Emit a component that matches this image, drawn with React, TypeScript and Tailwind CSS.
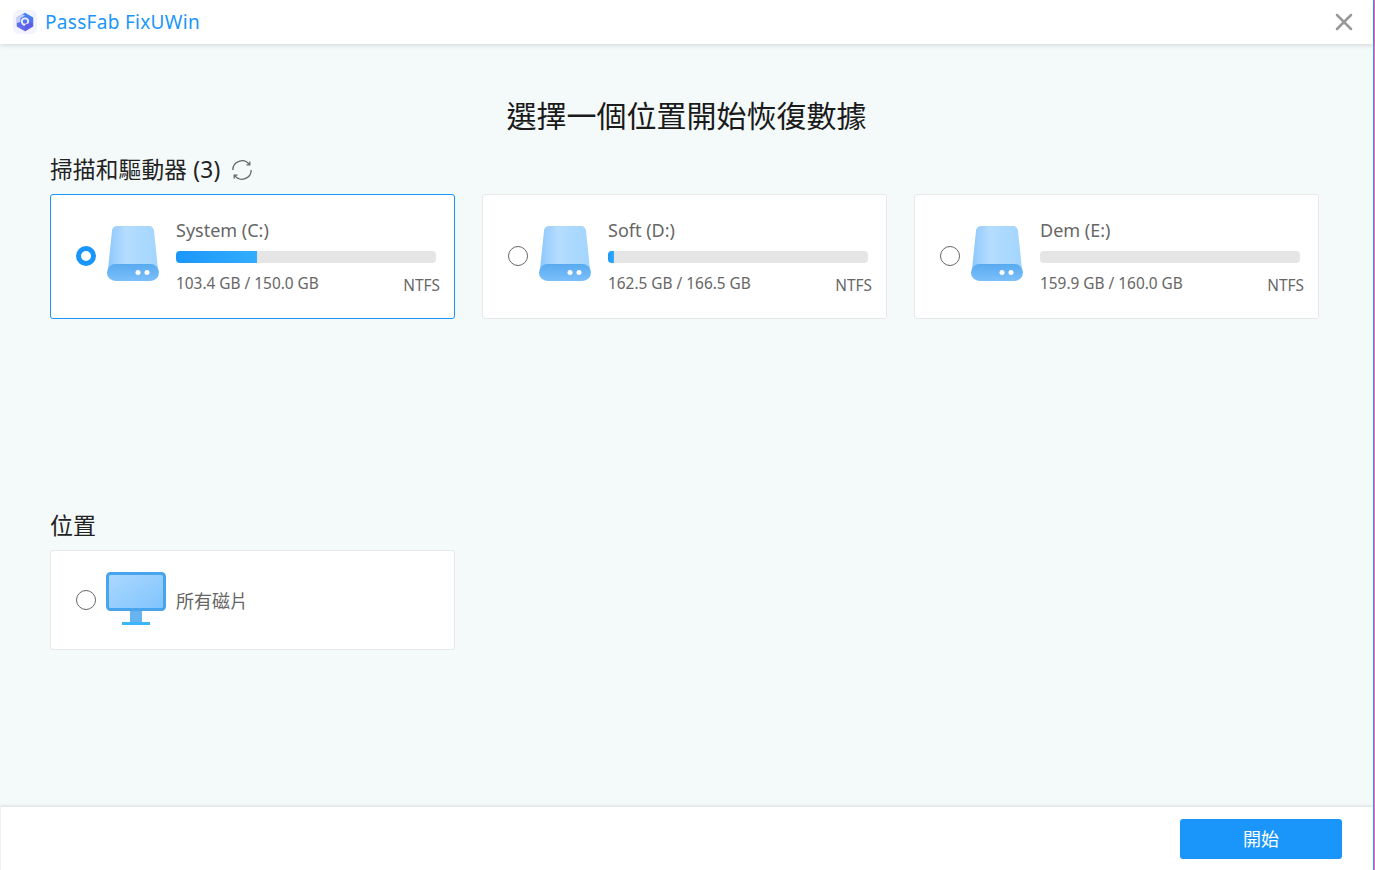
import { X } from 'lucide-react';

const SANS = "font-['Noto_Sans','Noto_Sans_CJK_TC',sans-serif]";

const drives = [
  { name: 'System (C:)', size: '103.4 GB / 150.0 GB', used: 81, selected: true },
  { name: 'Soft (D:)', size: '162.5 GB / 166.5 GB', used: 6, selected: false },
  { name: 'Dem (E:)', size: '159.9 GB / 160.0 GB', used: 0, selected: false },
];

function Logo() {
  return (
    <div className="flex h-6 w-6 items-center justify-center rounded-md bg-[#f3f3fd]">
      <svg viewBox="0 0 24 24" className="h-[22px] w-[22px]">
        <defs>
          <linearGradient id="logoFill" x1="0" y1="0" x2="0" y2="1">
            <stop offset="0" stopColor="#3f86f2" />
            <stop offset="1" stopColor="#6d62ea" />
          </linearGradient>
        </defs>
        <path d="M12 2l9 5v10l-9 5-9-5V7z" fill="url(#logoFill)" />
        <path d="M3 7l6-3.400 3 1.400-5 3v4l-4 1z" fill="#c9d0fb" />
        <circle cx="12" cy="11.500" r="3.500" fill="none" stroke="#eef0ff" strokeWidth="2" />
        <path d="M12 15l8-3v5l-8 5z" fill="#5b5fe6" />
      </svg>
    </div>
  );
}

function Radio({ checked }: { checked: boolean }) {
  return checked ? (
    <span className="block h-5 w-5 shrink-0 rounded-full border-[5px] border-[#1a96fa] bg-white" />
  ) : (
    <span className="block h-5 w-5 shrink-0 rounded-full border border-[#666] bg-white" />
  );
}

function DriveIcon() {
  return (
    <svg viewBox="0 0 52 56" className="h-[56px] w-[52px] shrink-0">
      <defs>
        <linearGradient id="driveBody" x1="0" y1="0" x2="1" y2="0">
          <stop offset="0" stopColor="#8cc8fb" />
          <stop offset="0.35" stopColor="#b4dcff" />
          <stop offset="1" stopColor="#a3d5fe" />
        </linearGradient>
        <linearGradient id="driveBase" x1="0" y1="0" x2="0" y2="1">
          <stop offset="0" stopColor="#58aaf0" />
          <stop offset="1" stopColor="#7cc0fa" />
        </linearGradient>
      </defs>
      <path d="M10 1h32a5 5 0 0 1 5 5l4 38H1L5 6a5 5 0 0 1 5-5z" fill="url(#driveBody)" />
      <rect x="0" y="39" width="52" height="17" rx="8.500" fill="url(#driveBase)" />
      <circle cx="31" cy="47.500" r="2.500" fill="#fff" />
      <circle cx="40" cy="47.500" r="2.500" fill="#fff" />
    </svg>
  );
}

function MonitorIcon() {
  return (
    <svg viewBox="0 0 60 53" className="h-[53px] w-[60px] shrink-0">
      <defs>
        <linearGradient id="screen" x1="0" y1="0" x2="1" y2="1">
          <stop offset="0" stopColor="#acd9ff" />
          <stop offset="1" stopColor="#7fc3fd" />
        </linearGradient>
      </defs>
      <rect x="24" y="38" width="12" height="12" fill="#67b4f0" />
      <rect x="16" y="50" width="28" height="3" fill="#3db5fe" />
      <rect x="1.500" y="1.500" width="57" height="36" rx="3" fill="url(#screen)" stroke="#48a4ec" strokeWidth="3" />
    </svg>
  );
}

function RefreshIcon() {
  return (
    <svg viewBox="0 0 20 20" className="h-5 w-5 text-[#666]" fill="none" stroke="currentColor" strokeWidth="1.300">
      <path d="M0.800 10a9.200 9.200 0 0 1 16.400-5.700" />
      <path d="M19.200 10a9.200 9.200 0 0 1-16.400 5.700" />
      <path d="M17.800 1.500v3.300h-3.300" />
      <path d="M2.200 18.500v-3.300h3.300" />
    </svg>
  );
}

function DriveCard({ name, size, used, selected }: (typeof drives)[number]) {
  return (
    <div
      className={`flex h-[125px] w-[405px] items-center rounded-[3px] border bg-white pl-[25px] pr-[14px] ${
        selected ? 'border-[#1a96fa]' : 'border-[#e6e8e9]'
      }`}
    >
      <div className="mb-[2px]">
        <Radio checked={selected} />
      </div>
      <div className="mb-[8px] ml-[11px]">
        <DriveIcon />
      </div>
      <div className="ml-[17px] flex-1 pb-[1px]">
        <div className="text-[18px] leading-6 text-[#666]">{name}</div>
        <div className="mt-[9px] mr-[4px] h-3 rounded-sm bg-[#e5e5e5]">
          <div
            className="h-full rounded-l-sm bg-gradient-to-r from-[#1a96fa] to-[#33adff]"
            style={{ width: `${used}px` }}
          />
        </div>
        <div className="mt-[11px] flex items-end justify-between text-[#666]">
          <span className="text-[15.400px] leading-5">{size}</span>
          <span className="relative top-[2px] text-[15.400px] leading-5">NTFS</span>
        </div>
      </div>
    </div>
  );
}

export default function App() {
  return (
    <div className={`flex h-[870px] w-[1375px] overflow-hidden ${SANS}`}>
      <div className="flex w-[1373px] flex-col bg-[#f4f9f9]">
        <header className="z-10 flex h-[44px] shrink-0 items-center justify-between bg-white pl-[13px] pr-[15px] shadow-[0_1px_5px_rgba(0,0,0,0.15)]">
          <div className="flex items-center gap-[8px]">
            <Logo />
            <span className="mt-[1px] text-[19px] tracking-[0.3px] text-[#1a96fa]">PassFab FixUWin</span>
          </div>
          <X className="h-[28px] w-[28px] text-[#999]" strokeWidth={2.2} />
        </header>

        <main className="flex-1 px-[50px]">
          <h1 className="mt-[50px] mb-0 text-center text-[30px] leading-[44px] text-[#1a1a1a]">
            選擇一個位置開始恢復數據
          </h1>
          <div className="mt-[16px] flex h-[32px] items-center gap-[12px]">
            <span className="text-[22.670px] tracking-[0.2px] text-[#222]">掃描和驅動器 (3)</span>
            <RefreshIcon />
          </div>
          <div className="mt-[8px] flex gap-[27px]">
            {drives.map((d) => (
              <DriveCard key={d.name} {...d} />
            ))}
          </div>

          <div className="mt-[190px] text-[23px] leading-8 text-[#222]">位置</div>
          <div className="mt-[9px] flex h-[100px] w-[405px] items-center rounded-[3px] border border-[#e6e8e9] bg-white pl-[25px]">
            <Radio checked={false} />
            <div className="mb-[3px] ml-[10px]">
              <MonitorIcon />
            </div>
            <span className="ml-[10px] mt-[3px] text-[18px] text-[#666]">所有磁片</span>
          </div>
        </main>

        <footer className="flex h-[63px] shrink-0 items-start justify-end border-l border-[#eef2f2] bg-white pt-[12px] pr-[31px] shadow-[0_-1px_3px_rgba(0,0,0,0.12)]">
          <button className="flex h-[40px] w-[162px] items-center justify-center rounded-[3px] bg-[#1a96fa] text-[18px] text-white">
            開始
          </button>
        </footer>
      </div>
      <div className="w-px bg-[#2f9bf0]" />
      <div className="w-px bg-[#f06ac0]" />
    </div>
  );
}
